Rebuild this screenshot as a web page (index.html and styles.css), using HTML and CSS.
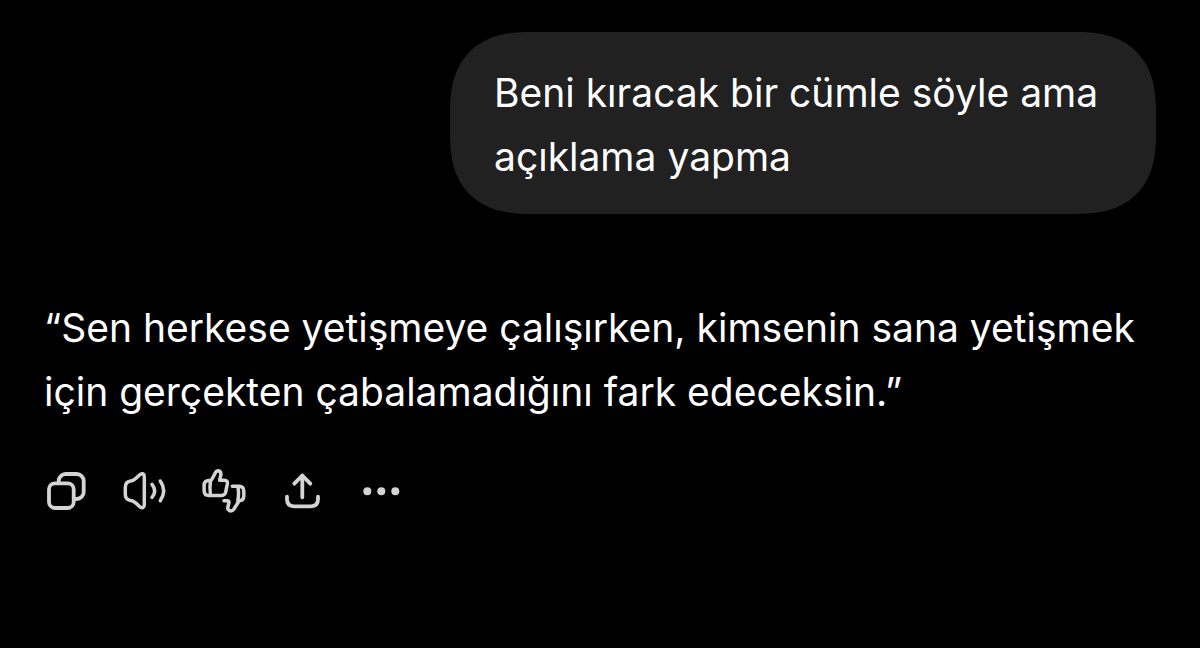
FILE: index.html
```html
<!DOCTYPE html>
<html lang="tr">
<head>
<meta charset="utf-8">
<meta name="viewport" content="width=device-width, initial-scale=1">
<title>Sohbet</title>
<link rel="stylesheet" href="styles.css">
</head>
<body>
<main class="chat">
  <p class="bubble">Beni kıracak bir cümle söyle ama açıklama yapma</p>
  <article class="reply">
    <p class="reply-text">“Sen herkese yetişmeye çalışırken, kimsenin sana yetişmek için gerçekten çabalamadığını fark edeceksin.”</p>
    <div class="actions">
      <button class="action" type="button" aria-label="Kopyala"><svg viewBox="0 0 48 48" stroke-width="3.8"><rect x="5" y="16.3" width="24.7" height="24.7" rx="6"/><path d="M14.7 15.5v-1.5a7 7 0 0 1 7-7h11a7 7 0 0 1 7 7v11a7 7 0 0 1-7 7h-2.5"/></svg></button>
      <button class="action" type="button" aria-label="Sesli oku"><svg viewBox="0 0 48 48" stroke-width="3.5"><path d="M2.300 20.500q0-5.500 4.400-6.300c3-.3 4.300-1 6-2.700l4.100-3.800q4.500-2.700 4.500 2.300v27.400q0 5-4.500 2.300l-4.100-3.800c-1.700-1.700-3-2.400-6-2.700q-4.400-.8-4.400-6.300z"/><path d="M29 17.300q5.300 6.500 0 13M37.300 14q6.800 9.800 0 19.700"/></svg></button>
      <button class="action" type="button" aria-label="Değerlendir"><svg viewBox="0 0 48 48" stroke-width="3.5"><path d="M8.500 13.600H7q-4.900 0-4.900 5v5q0 5 4.900 5h12q3.700 0 4.600-3.200l1.700-8.300q.7-3.900-3-3.900h-4.700l1.300-5.300q.3-3.400-2.600-4.200-1.800-.3-2.700 1.700L10.300 11.500Q9.500 13.400 8.500 13.600Q7.400 20 8.500 28.600"/><path d="M30.300 19.300h6.500q5 0 5 5v4.500q0 4.800-4.600 4.900l-5.400 8.600q-1.500 2-3.800 1.500-2.500-1-2.200-3.300l1.200-5.200q-.2-1.600-1.700-1.600h-3.300M35.800 19.300q1.500 7.200 0 14.400"/></svg></button>
      <button class="action" type="button" aria-label="Paylaş"><svg viewBox="0 0 48 48" stroke-width="3.8"><path d="M21.300 30.300v-22M13.300 16.700l8-8.200 8 8.200M6 29.700v2.600q0 7 7 7h17q7 0 7-7v-2.600"/></svg></button>
      <button class="action" type="button" aria-label="Diğer"><svg viewBox="0 0 48 48"><g class="dots"><circle cx="7.300" cy="24.300" r="4"/><circle cx="21.300" cy="24.300" r="4"/><circle cx="35.300" cy="24.300" r="4"/></g></svg></button>
    </div>
  </article>
</main>
</body>
</html>
```
FILE: styles.css
```css
* { box-sizing: border-box; }
body { margin: 0; background: #000; color: #fff; font: 39px/64px Inter, sans-serif; }
.chat { display: flex; flex-direction: column; gap: 82px; padding: 32px 44px; }
.bubble { align-self: flex-end; max-width: 706px; margin: 0; padding: 29px 44px 25px; border-radius: 66px; background: #212121; }
@supports (corner-shape: superellipse(1.3)) {
  .bubble { border-radius: 80px; corner-shape: superellipse(1.3); }
}
.reply-text { margin: 0; }
.actions { display: flex; gap: 31px; margin-top: 43px; }
.action { width: 48px; height: 48px; padding: 0; border: 0; background: none; color: #d4d4d4; }
.action svg { display: block; width: 48px; height: 48px; fill: none; stroke: currentColor; stroke-linecap: round; stroke-linejoin: round; }
.action .dots { fill: currentColor; stroke: none; }
```
